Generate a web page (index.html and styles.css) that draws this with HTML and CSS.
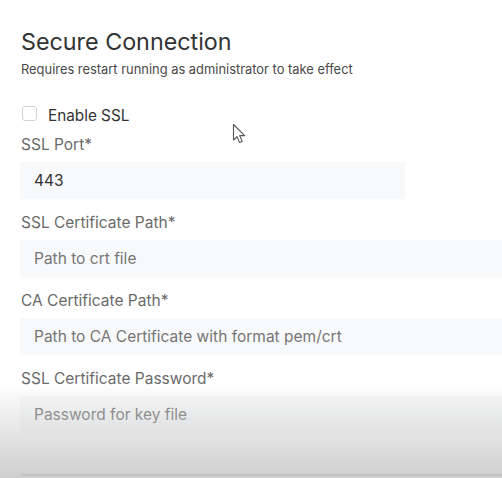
FILE: index.html
```html
<!DOCTYPE html>
<html>
<head>
<meta charset="utf-8">
<link rel="stylesheet" href="styles.css">
</head>
<body>
<div class="panel">
  <h1 class="title">Secure Connection</h1>
  <p class="subtitle">Requires restart running as administrator to take effect</p>
  <label class="check-row"><span class="checkbox"></span><span class="check-label">Enable SSL</span></label>
  <div class="field">
    <div class="label">SSL Port*</div>
    <div class="input short"><span class="value">443</span></div>
  </div>
  <div class="field">
    <div class="label">SSL Certificate Path*</div>
    <div class="input"><span class="placeholder">Path to crt file</span></div>
  </div>
  <div class="field">
    <div class="label">CA Certificate Path*</div>
    <div class="input"><span class="placeholder">Path to CA Certificate with format pem/crt</span></div>
  </div>
  <div class="field">
    <div class="label">SSL Certificate Password*</div>
    <div class="input"><span class="placeholder">Password for key file</span></div>
  </div>
  <div class="divider"></div>
</div>
<div class="fade"></div>
<svg class="cursor" width="16" height="24" viewBox="0 0 16 24">
  <path d="M1.5 1.5 L1.5 17 L5 13.6 L7.6 19.6 L10.2 18.5 L7.7 12.6 L12.6 12.6 Z" fill="#fff" stroke="#555" stroke-width="1.1" stroke-linejoin="round"/>
</svg>
</body>
</html>
```
FILE: styles.css
```css
html, body {
  margin: 0;
  padding: 0;
  background: #fff;
  overflow: hidden;
  width: 502px;
  height: 478px;
}
body {
  font-family: Inter, "Noto Sans", sans-serif;
  position: relative;
}
.panel {
  padding: 28px 0 0 20px;
  display: flex;
  flex-direction: column;
}
.title {
  margin: 0 0 0 1px;
  font-size: 23.3px;
  line-height: 28px;
  font-weight: 400;
  color: #333;
}
.subtitle {
  margin: 6px 0 0 1px;
  font-size: 12.9px;
  line-height: 16px;
  color: #4a4a4a;
}
.check-row {
  margin-top: 27px;
  display: flex;
  align-items: center;
  height: 20px;
}
.checkbox {
  width: 13px;
  height: 13px;
  margin-left: 2px;
  border: 1px solid #d2d2d2;
  border-radius: 3px;
  background: #fff;
  margin-top: -3px;
}
.check-label {
  margin-left: 11px;
  font-size: 15.3px;
  color: #333;
}
.field {
  margin-top: 10px;
  display: flex;
  flex-direction: column;
}
.field + .field {
  margin-top: 14px;
}
.label {
  margin-left: 1px;
  font-size: 15.5px;
  line-height: 20px;
  color: #6a6a6a;
}
.input {
  margin-top: 7px;
  height: 37px;
  width: 500px;
  background: #f8f9fa;
  display: flex;
  align-items: center;
  padding-left: 14px;
  box-sizing: border-box;
  font-size: 15.5px;
}
.input.short {
  width: 385px;
}
.value {
  color: #333;
}
.placeholder {
  color: #767676;
}
.divider {
  margin-top: 41px;
  height: 2px;
  background: #c4c4c4;
  margin-left: 1px;
}
.fade {
  position: absolute;
  left: 0;
  right: 0;
  top: 383px;
  height: 95px;
  background: linear-gradient(to bottom, rgba(200,200,200,0) 0%, rgba(200,200,200,0.45) 50%, rgba(195,195,195,0.8) 100%);
  pointer-events: none;
}
.cursor {
  position: absolute;
  left: 232px;
  top: 123px;
}
```
